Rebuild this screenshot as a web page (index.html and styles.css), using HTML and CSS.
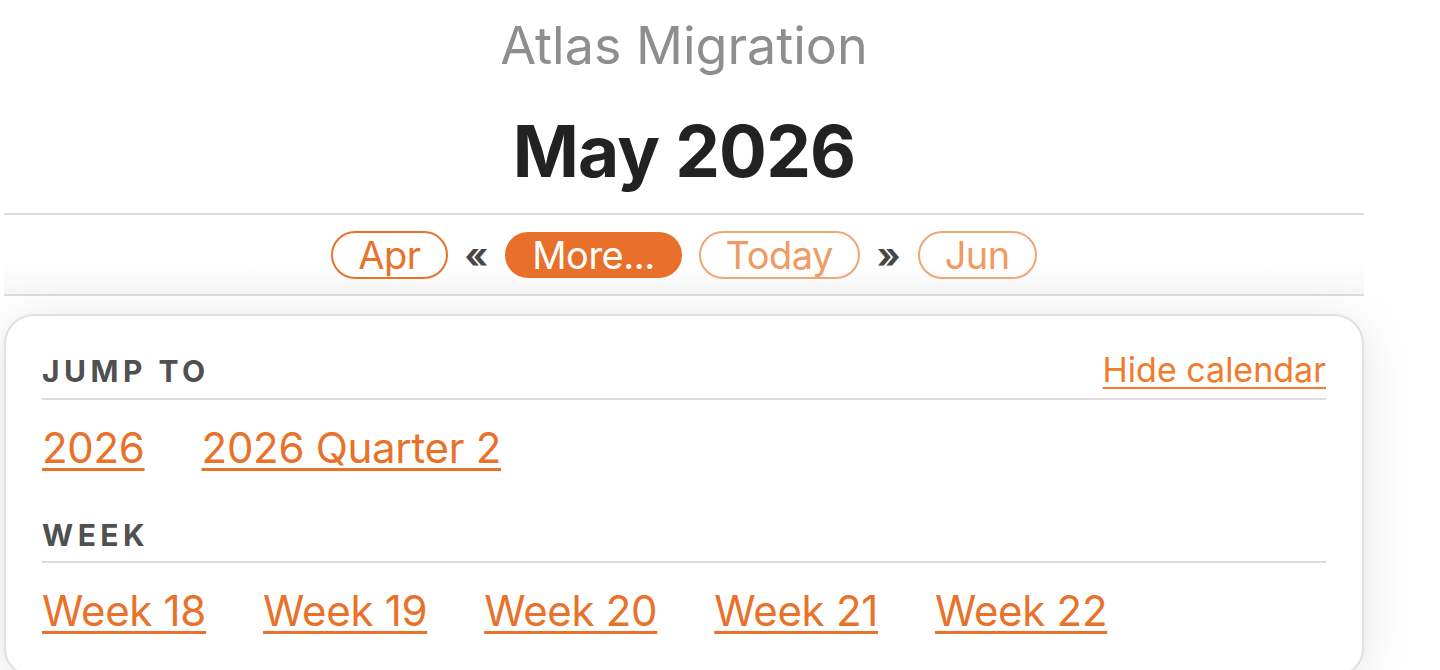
FILE: index.html
```html
<!DOCTYPE html>
<html lang="en">
<head>
<meta charset="utf-8">
<title>May 2026 – Atlas Migration</title>
<link rel="stylesheet" href="styles.css">
</head>
<body>
<div class="page">
  <header class="head">
    <div class="project">Atlas Migration</div>
    <h1 class="month">May 2026</h1>
  </header>
  <nav class="nav">
    <a class="pill" href="#">Apr</a>
    <span class="sep">«</span>
    <a class="pill pill-active" href="#">More...</a>
    <a class="pill pill-dim" href="#">Today</a>
    <span class="sep">»</span>
    <a class="pill pill-dim" href="#">Jun</a>
  </nav>
  <section class="card">
    <div class="sec-head">
      <span class="sec-label">Jump to</span>
      <a class="hide-link" href="#">Hide calendar</a>
    </div>
    <div class="links">
      <a href="#">2026</a>
      <a href="#">2026 Quarter 2</a>
    </div>
    <div class="sec-head sec-head-next">
      <span class="sec-label">Week</span>
    </div>
    <div class="links">
      <a href="#">Week 18</a>
      <a href="#">Week 19</a>
      <a href="#">Week 20</a>
      <a href="#">Week 21</a>
      <a href="#">Week 22</a>
    </div>
  </section>
</div>
</body>
</html>
```

FILE: styles.css
```css
html, body {
  margin: 0;
  padding: 0;
  background: #ffffff;
}

body {
  font-family: Inter, "Noto Sans", "Liberation Sans", sans-serif;
  color: #222;
  overflow: hidden;
}

.page {
  width: 1360px;
  margin-left: 4px;
}

.head {
  text-align: center;
  padding-top: 15px;
}

.project {
  font-size: 52px;
  line-height: 1.2;
  color: #8e8e8e;
  font-weight: 400;
}

.month {
  margin: 32px 0 0;
  font-size: 71px;
  line-height: 1.2;
  font-weight: 700;
  color: #222;
  letter-spacing: -0.8px;
}

.nav {
  margin-top: 18px;
  border-top: 2px solid #dcdcdc;
  border-bottom: 2px solid #dcdcdc;
  padding: 16px 0 15px;
  background: linear-gradient(#ffffff 60%, #f7f7f7);
  display: flex;
  justify-content: center;
  align-items: center;
  gap: 17px;
}

.pill {
  display: inline-flex;
  align-items: center;
  height: 48px;
  box-sizing: border-box;
  padding: 0 25px;
  border: 2px solid #e8722a;
  border-radius: 24px;
  color: #e8722a;
  text-decoration: none;
  font-size: 38px;
  letter-spacing: -0.5px;
  background: #fff;
}

.pill-active {
  background: #e8702a;
  border-color: #e8702a;
  color: #fff;
  height: 46px;
}

.pill-dim {
  color: #ef9b63;
  border-color: #f0a673;
  background: transparent;
}

.sep {
  font-size: 36px;
  font-weight: 700;
  color: #474747;
  line-height: 1;
}

.card {
  margin-top: 18px;
  border: 2px solid #e0e0e0;
  border-radius: 30px;
  padding: 34px 36px 40px;
  background: #fff;
  box-shadow: 0 6px 48px rgba(0, 0, 0, 0.11);
}

.sec-head {
  display: flex;
  justify-content: space-between;
  align-items: baseline;
  padding-bottom: 8px;
  border-bottom: 2px solid #dcdcdc;
}

.sec-head-next {
  margin-top: 43px;
}

.sec-label {
  font-size: 30px;
  line-height: 1.2;
  font-weight: 700;
  letter-spacing: 4.5px;
  text-transform: uppercase;
  color: #505050;
}

.hide-link {
  font-size: 34px;
  line-height: 1.2;
  color: #f27a2b;
  text-decoration: underline;
  text-decoration-thickness: 2px;
  text-underline-offset: 5px;
}

.links {
  display: flex;
  gap: 57px;
  margin-top: 23px;
}

.links a {
  font-size: 42px;
  line-height: 1.2;
  color: #e8722a;
  text-decoration: underline;
  text-decoration-thickness: 3px;
  text-underline-offset: 5px;
  letter-spacing: -0.3px;
}
```
